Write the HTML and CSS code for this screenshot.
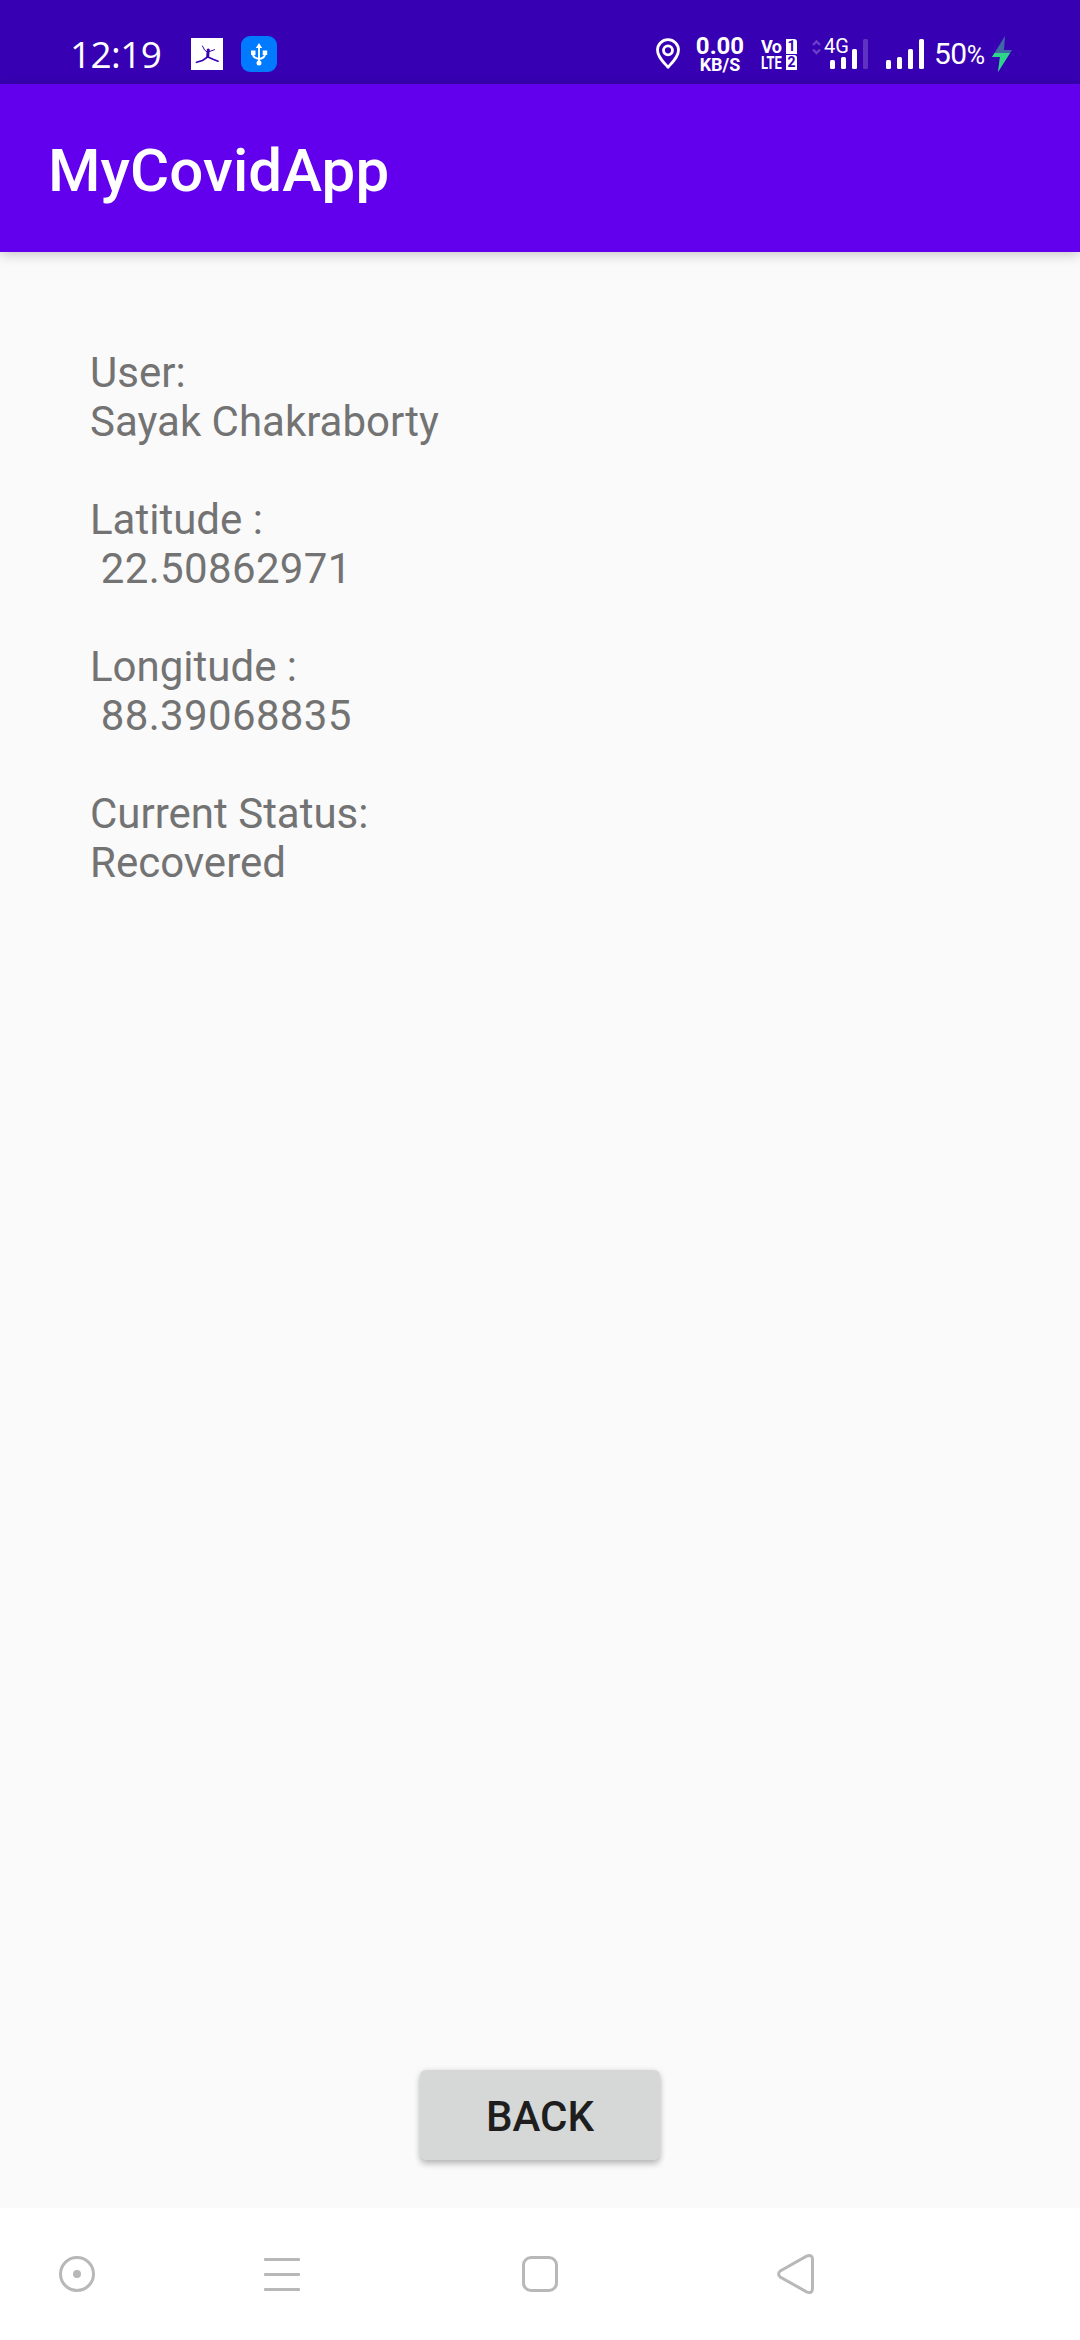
FILE: index.html
```html
<!DOCTYPE html>
<html lang="en">
<head>
<meta charset="utf-8">
<title>MyCovidApp</title>
<link rel="stylesheet" href="styles.css">
</head>
<body>
<div class="screen">
  <header class="status">
    <span class="clock">12:19</span>
    <svg class="ic-runner" width="32" height="32" viewBox="0 0 32 32"><path fill="#fff" d="M0 0h32v32H0z"/><g fill="none" stroke="#3700b3" stroke-linecap="round"><path stroke-width="1" d="M11.500 8l2 4 3 2.200 7-2.500"/><path stroke-width="3" d="M17 14.500l-.3 4"/><path stroke-width="1.700" d="M16.500 19l-5 3.500-6 1.800M17 19l5 2.200 5 2"/></g><circle cx="17.300" cy="12" r="1.600" fill="#3700b3"/></svg>
    <svg class="ic-usb" width="36" height="36" viewBox="0 0 36 36"><rect width="36" height="36" rx="9" fill="#007aff"/><g fill="none" stroke="#fff" stroke-width="1.900"><path d="M18 10v17M12 16v2q0 4 6 5M24 16v2q0 4-6 5"/></g><path fill="#fff" d="M18 7l3.200 5h-6.400zM10 14.500h4.500v4.500h-4.500zM21.700 14.500h4.500v4.500h-4.500z"/><circle cx="18" cy="27" r="2.500" fill="#fff"/></svg>
    <svg class="ic-pin" width="24" height="32" viewBox="0 0 24 32"><path fill="none" stroke="#fff" stroke-width="2.800" stroke-linejoin="round" d="M12 29.300C7 23.500 1.500 18.500 1.500 12.200a10.500 10.500 0 0 1 21 0C22.500 18.500 17 23.500 12 29.300z"/><circle cx="12" cy="12.300" r="4.500" fill="none" stroke="#fff" stroke-width="2.800"/></svg>
    <div class="speed"><span class="rate">0.00</span><span class="unit">KB/S</span></div>
    <div class="volte">
      <div class="row"><span class="vo">Vo</span><span class="sim">1</span></div>
      <div class="row"><span class="lte">LTE</span><span class="sim">2</span></div>
    </div>
    <div class="cell">
      <svg width="56" height="32" viewBox="0 0 56 32"><path fill="none" stroke="#6a3fc8" stroke-width="2.400" d="M1 7l3.500-3.500L8 7M1 11.500l3.500 3.500L8 11.500"/><g fill="#fff"><rect x="18" y="22" width="5" height="9" rx="1.500"/><rect x="29" y="19" width="5" height="12" rx="1.500"/><rect x="40" y="11" width="5" height="20" rx="1.500"/></g><rect x="51" y="1" width="5" height="30" rx="1.500" fill="#5f33c2"/></svg>
      <span class="gen">4G</span>
    </div>
    <svg class="ic-signal" width="39" height="32" viewBox="0 0 39 32"><g fill="#fff"><rect y="22" width="5" height="9" rx="1.500"/><rect x="11" y="19" width="5" height="12" rx="1.500"/><rect x="22" y="11" width="5" height="20" rx="1.500"/><rect x="33" y="1" width="5" height="30" rx="1.500"/></g></svg>
    <span class="battery">50<span class="pct">%</span></span>
    <svg class="ic-bolt" width="20" height="36" viewBox="0 0 20 36"><path fill="#3d6aa5" d="M13 0L0 21h8L6 36 20 14h-8z"/><path fill="#2ed48a" d="M2.500 17H18L6 36l2-15H0z"/></svg>
  </header>
  <div class="appbar"><h1>MyCovidApp</h1></div>
  <main>
    <div class="details">User:
Sayak Chakraborty

Latitude :
<span class="coord"> 22.50862971</span>

Longitude :
<span class="coord"> 88.39068835</span>

Current Status:
Recovered</div>
    <button class="back">BACK</button>
  </main>
  <nav>
    <svg class="nav-assist" width="36" height="36" viewBox="0 0 36 36"><circle cx="18" cy="18" r="16.500" fill="none" stroke="#b8b8b8" stroke-width="3"/><circle cx="18" cy="18" r="4" fill="#b8b8b8"/></svg>
    <svg class="nav-recent" width="36" height="33" viewBox="0 0 36 33"><g fill="#b8b8b8"><rect width="36" height="3" rx="1"/><rect y="15" width="36" height="3" rx="1"/><rect y="30" width="36" height="3" rx="1"/></g></svg>
    <svg class="nav-home" width="36" height="36" viewBox="0 0 36 36"><rect x="1.500" y="1.500" width="33" height="33" rx="7.500" fill="none" stroke="#b8b8b8" stroke-width="3"/></svg>
    <svg class="nav-back" width="38" height="40" viewBox="0 0 38 40"><path fill="none" stroke="#b8b8b8" stroke-width="3" d="M3.200 17L29.500 2.200Q35.500 0 35.500 5.500V34.500Q35.500 40 29.500 37.800L3.200 23Q0 20 3.200 17z"/></svg>
  </nav>
</div>
</body>
</html>
```
FILE: styles.css
```css
body { margin: 0; font-family: Roboto, sans-serif; }
.screen { width: 1080px; height: 2340px; display: flex; flex-direction: column; background: #fafafa; overflow: hidden; }

.status { height: 84px; box-sizing: border-box; padding: 24px 0 0 70px; display: flex; align-items: center; background: #3700b3; color: #fff; }
.status > * { flex: none; }
.clock { width: 120px; font: 400 37px/60px "Open Sans", sans-serif; letter-spacing: -.6px; white-space: nowrap; }
.ic-runner { margin-left: 1px; }
.ic-usb { margin-left: 18px; }
.ic-pin { margin-left: 379px; }
.speed { width: 50px; margin-left: 15px; display: flex; flex-direction: column; align-items: center; font-weight: 700; }
.rate { font-size: 24px; line-height: 20px; }
.unit { font-size: 18px; line-height: 17px; }
.volte { width: 36px; margin-left: 16px; display: flex; flex-direction: column; gap: 1px; font-weight: 700; }
.row { display: flex; justify-content: space-between; height: 15px; line-height: 15px; }
.vo { width: 22px; font-size: 18px; letter-spacing: -.5px; }
.lte { width: 23px; font: 700 18px/15px Roboto, sans-serif; transform: scaleX(.72); transform-origin: left; }
.sim { width: 11px; background: #fff; color: #3700b3; border-radius: 0 3px 0 0; font-size: 14px; text-align: center; }
.cell { position: relative; width: 56px; height: 32px; margin-left: 15px; }
.gen { position: absolute; left: 12px; top: -2px; font-size: 20px; line-height: 20px; }
.ic-signal { margin-left: 18px; }
.battery { width: 54px; margin: 2px 0 0 9px; font-size: 30px; line-height: 40px; letter-spacing: -.5px; white-space: nowrap; }
.pct { font-size: 25px; }
.ic-bolt { margin-left: 4px; }

.appbar { position: relative; height: 168px; box-sizing: border-box; display: flex; align-items: center; padding: 5px 0 0 48px; background: #6200ee; color: #fff; box-shadow: 0 2px 12px rgba(0,0,0,.22); }
h1 { margin: 0; font-weight: 500; font-size: 60px; line-height: 70px; letter-spacing: .1px; }

main { flex: 1; display: flex; flex-direction: column; justify-content: space-between; align-items: flex-start; padding: 96px 90px 48px; }
.details { white-space: pre; font-size: 42px; line-height: 49px; color: #737373; }
.coord { letter-spacing: .35px; }
.back { align-self: center; width: 240px; height: 90px; padding: 3px 0 0; border: 0; border-radius: 6px; background: #d6d7d7; color: #1e1e1e; font: 500 42px/87px Roboto, sans-serif; box-shadow: 0 4px 6px rgba(0,0,0,.24), 0 0 6px rgba(0,0,0,.08); }

nav { height: 132px; display: flex; align-items: center; background: #fff; }
.nav-assist { margin-left: 59px; }
.nav-recent { margin-left: 169px; }
.nav-home { margin-left: 222px; }
.nav-back { margin-left: 219px; }
```
